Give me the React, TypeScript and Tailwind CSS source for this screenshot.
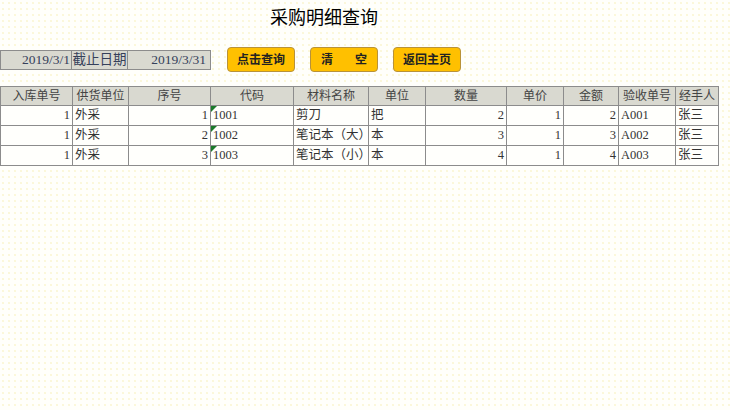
import React from "react";

const cols = [
  { name: "入库单号", w: "w-[72px]" },
  { name: "供货单位", w: "w-[56px]" },
  { name: "序号", w: "w-[82px]" },
  { name: "代码", w: "w-[83px]" },
  { name: "材料名称", w: "w-[75px]" },
  { name: "单位", w: "w-[57px]" },
  { name: "数量", w: "w-[81px]" },
  { name: "单价", w: "w-[57px]" },
  { name: "金额", w: "w-[55px]" },
  { name: "验收单号", w: "w-[57px]" },
  { name: "经手人", w: "w-[43px]" },
];

const rows = [
  { no: 1, supplier: "外采", seq: 1, code: "1001", name: "剪刀", unit: "把", qty: 2, price: 1, amount: 2, check: "A001", person: "张三" },
  { no: 1, supplier: "外采", seq: 2, code: "1002", name: "笔记本（大）", unit: "本", qty: 3, price: 1, amount: 3, check: "A002", person: "张三" },
  { no: 1, supplier: "外采", seq: 3, code: "1003", name: "笔记本（小）", unit: "本", qty: 4, price: 1, amount: 4, check: "A003", person: "张三" },
];

const serif = "font-['Liberation_Serif','Noto_Sans_CJK_SC',serif]";

function Btn({ children }: { children: React.ReactNode }) {
  return (
    <button className="w-[68px] h-[25px] rounded-[4px] bg-[#ffc000] border border-[#b8923a] text-[12px] text-[#222] font-semibold flex items-center justify-center">
      {children}
    </button>
  );
}

export default function App() {
  const td = "border border-[#8c8c8c] h-[20px] px-[2px] text-[12.5px] text-[#333] leading-none";
  return (
    <div
      className={`w-[730px] h-[410px] bg-[#fffffb] bg-[radial-gradient(#f6eeb4_0.6px,transparent_0.8px)] bg-[size:6px_6px] ${serif} overflow-hidden`}
    >
      {/* title */}
      <div className="pt-[5px] pl-[270px] h-[30px] text-[18px] leading-[22px] text-black font-['Noto_Sans_CJK_SC',sans-serif]">
        采购明细查询
      </div>

      {/* date + buttons */}
      <div className="mt-[17px] flex items-center h-[25px]">
        <div className="flex h-[20px] border border-[#8c8c8c] bg-[#d9d9d0] text-[13.5px] text-[#35405a] leading-[18px]">
          <div className="w-[71px] text-right pr-[1px] border-r border-[#8c8c8c]">2019/3/1</div>
          <div className="w-[56px] text-center border-r border-[#8c8c8c]">截止日期</div>
          <div className="w-[82px] text-right pr-[4px]">2019/3/31</div>
        </div>
        <div className="ml-[16px] flex gap-[15px]">
          <Btn>点击查询</Btn>
          <Btn>
            <span className="flex w-full justify-between px-[10px]">
              <span>清</span>
              <span>空</span>
            </span>
          </Btn>
          <Btn>返回主页</Btn>
        </div>
      </div>

      {/* table */}
      <table className="mt-[14px] border-collapse table-fixed w-[718px]">
        <thead>
          <tr>
            {cols.map((c) => (
              <th
                key={c.name}
                className={`${c.w} border border-[#8c8c8c] bg-[#d9d9d0] h-[19px] text-[12px] font-normal text-[#444] text-center leading-none`}
              >
                {c.name}
              </th>
            ))}
          </tr>
        </thead>
        <tbody className="bg-[#fffffc]">
          {rows.map((r) => (
            <tr key={r.seq}>
              <td className={`${td} text-right`}>{r.no}</td>
              <td className={td}>{r.supplier}</td>
              <td className={`${td} text-right`}>{r.seq}</td>
              <td className={`${td} relative`}>
                <span className="absolute left-0 top-0 w-0 h-0 border-t-[6px] border-t-[#1a7a2a] border-r-[6px] border-r-transparent" />
                {r.code}
              </td>
              <td className={td}>{r.name}</td>
              <td className={td}>{r.unit}</td>
              <td className={`${td} text-right`}>{r.qty}</td>
              <td className={`${td} text-right`}>{r.price}</td>
              <td className={`${td} text-right`}>{r.amount}</td>
              <td className={td}>{r.check}</td>
              <td className={td}>{r.person}</td>
            </tr>
          ))}
        </tbody>
      </table>
    </div>
  );
}
